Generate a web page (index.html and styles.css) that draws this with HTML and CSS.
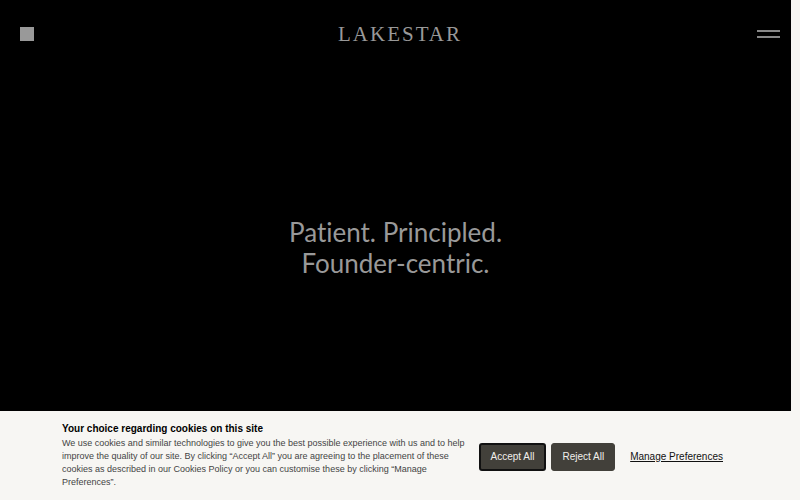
FILE: index.html
```html
<!DOCTYPE html>
<html lang="en">
  <head>
    <meta charset="utf-8">
    <meta name="viewport" content="width=device-width, initial-scale=1">
    <title>Lakestar</title>
    <link rel="stylesheet" href="styles.css">
  </head>

  <body>
    <header class="header">
      <a class="square" href="#" aria-label="Portfolio"></a>
      <a class="logo" href="#">LAKESTAR</a>
      <button class="menu" type="button" aria-label="Menu">
        <span class="menu-line"></span>
        <span class="menu-line"></span>
      </button>
    </header>

    <main class="hero">
      <h1>Patient. Principled.<br>Founder-centric.</h1>
    </main>

    <section class="cookies">
      <div class="cookies-text">
        <h2>Your choice regarding cookies on this site</h2>
        <p>We use cookies and similar technologies to give you the best possible experience with us and to help improve the quality of our site. By clicking “Accept All” you are agreeing to the placement of these cookies as described in our Cookies Policy or you can customise these by clicking “Manage Preferences”.</p>
      </div>
      <div class="cookies-actions">
        <button class="btn btn-focus" type="button">Accept All</button>
        <button class="btn" type="button">Reject All</button>
        <a class="manage" href="#">Manage Preferences</a>
      </div>
    </section>
  </body>
</html>
```
FILE: styles.css
```css
* {
  box-sizing: border-box;
}
body {
  margin: 0;
  min-height: 100vh;
  display: flex;
  flex-direction: column;
  background: #f7f6f3;
  font-family: "Liberation Sans", Arial, sans-serif;
}
h1, h2, p {
  margin: 0;
}

/* header sits over the hero */
.header {
  position: absolute;
  top: 0;
  left: 0;
  right: 0;
  display: grid;
  grid-template-columns: 1fr auto 1fr;
  align-items: center;
  height: 68px;
  padding: 0 20px;
}
.square {
  width: 14px;
  height: 14px;
  background: #999;
}
.logo {
  color: #999;
  font-family: "Liberation Serif", "Times New Roman", serif;
  font-size: 21px;
  line-height: 24px;
  letter-spacing: 2px;
  text-decoration: none;
}
.menu {
  justify-self: end;
  display: flex;
  flex-direction: column;
  gap: 4px;
  width: 23px;
  padding: 0;
  border: 0;
  background: none;
  cursor: pointer;
}
.menu-line {
  height: 2px;
  background: #888;
}

.hero {
  flex: 1;
  display: flex;
  align-items: center;
  justify-content: center;
  margin-right: 9px;
  padding-top: 84px;
  background: #000;
}
.hero h1 {
  color: #999;
  font-family: Lato, "Open Sans", sans-serif;
  font-size: 26px;
  font-weight: 400;
  font-variant-ligatures: none;
  line-height: 31px;
  text-align: center;
}

.cookies {
  display: flex;
  align-items: center;
  gap: 10px;
  padding: 11px 62px;
}
.cookies-text {
  flex: 1;
}
.cookies h2 {
  margin-bottom: 2px;
  color: #000;
  font-size: 10px;
  line-height: 13px;
}
.cookies p {
  color: #444;
  font-size: 9px;
  line-height: 13px;
}
.cookies-actions {
  display: flex;
  align-items: center;
  gap: 5px;
  padding-top: 2px;
}
.btn {
  height: 28px;
  padding: 0 10px;
  border: 1px solid #42403a;
  border-radius: 3px;
  background: #42403a;
  color: #f0efeb;
  font-family: inherit;
  font-size: 10px;
  cursor: pointer;
}
.btn-focus {
  border: 2px solid #111;
}
.manage {
  margin: 0 15px 0 10px;
  color: #111;
  font-size: 10px;
}
```
